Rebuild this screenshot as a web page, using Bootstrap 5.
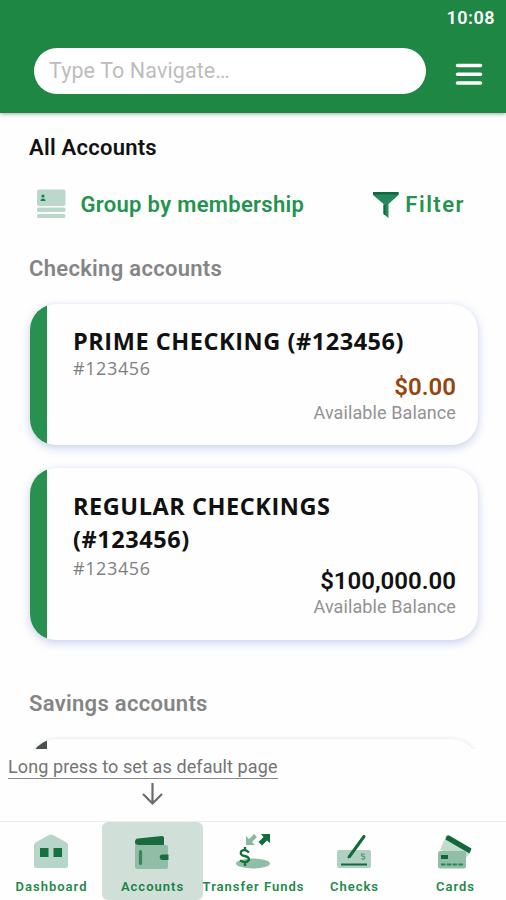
<!DOCTYPE html>
<html lang="en">
<head>
<meta charset="utf-8">
<meta name="viewport" content="width=device-width, initial-scale=1">
<title>All Accounts</title>
<link href="https://cdn.jsdelivr.net/npm/bootstrap@5.3.0/dist/css/bootstrap.min.css" rel="stylesheet">
<style>
body{font-family:Roboto,"Liberation Sans",sans-serif;background:#fefefe;color:#111;height:900px;overflow:hidden}
.app-header{height:113px;background:#1d8743;box-shadow:0 1px 4px rgba(0,0,0,.35);z-index:2;padding:6px 11px 0 34px}
.clock{font-size:18px;line-height:24px;font-weight:600;letter-spacing:.5px}
.search-row{margin-top:18px}
.search-box.form-control{width:392px;height:46px;border:0;border-radius:23px;padding:0 15px 2px;font-size:21.5px;letter-spacing:.1px;line-height:44px;color:#666}
.search-box::placeholder{color:#bdbdbd;opacity:1}
.menu-icon{display:block;margin-top:4px}
.accounts{height:636px;padding:21px 28px 0 29px}
.page-title{font-size:22px;line-height:28px;font-weight:600;letter-spacing:.25px}
.tools{height:40px;margin-top:22px;padding:0 13px 0 8px;font-size:22px;font-weight:600;color:#23934d}
.group-label{margin-left:14.5px;letter-spacing:.32px}
.filter-label{margin-left:6.5px;letter-spacing:1.5px}
.section-name{font-size:22px;line-height:28px;font-weight:600;letter-spacing:.3px;color:#858585}
.first-section{margin:31px 0 21px}
.second-section{margin:50px 0 21px}
.account{margin-left:1px;border-radius:26px;border:0;background:#fefefe;box-shadow:0 3px 10px rgba(105,130,205,.36),0 0 1px rgba(110,120,140,.2)}
.stripe{width:17px;background:#28914f}
.account-body{padding:21px 22px 0 26px}
.account-name{font-family:"Open Sans","Noto Sans",sans-serif;font-weight:700;font-size:23.5px;line-height:33px;letter-spacing:.55px;color:#111}
.account-no{font-family:"Open Sans","Noto Sans",sans-serif;font-size:18px;line-height:20px;color:#808080;letter-spacing:.6px}
.amount{font-size:24px;line-height:28px;font-weight:600}
.balance-label{font-size:18px;line-height:24px;color:#929292;letter-spacing:.1px}
.overdrawn{color:#95450f}
.prime{height:141px}
.prime .balance{margin-top:-5px}
.regular{height:172px;margin-top:23px}
.regular .account-body{padding-top:22px}
.regular .account-no{margin-top:2px}
.regular .balance{margin-top:-11px}
.savings{height:141px;box-shadow:0 1px 5px rgba(100,120,120,.3)}
.savings .stripe{background:#4b504e}
.hint{height:72px;padding:7px 8px 0;color:#747474;background:#fefefe;z-index:1}
.hint-text{font-size:18px;line-height:22px;border-bottom:1.5px solid #888;letter-spacing:.1px;width:270px;white-space:nowrap}
.hint-arrow{margin:4px 0 0 134px}
.tabs{height:79px;border-top:1px solid #ececec;background:#fefefe;z-index:1;padding-left:1px}
.tab{flex:1 1 0;min-width:0;padding-top:10px;color:#23894a;font-size:13px;font-weight:600;letter-spacing:1px;line-height:18px;white-space:nowrap;text-decoration:none}
.tab.active{background:#d0e0d8;border-radius:6px;color:#1c8143}
.tab svg{margin:0 1.5px 8px 0}
</style>
<script src="https://cdn.jsdelivr.net/npm/bootstrap@5.3.0/dist/js/bootstrap.bundle.min.js"></script>
</head>
<body class="d-flex flex-column">
<header class="app-header position-relative flex-shrink-0">
  <div class="clock text-white text-end">10:08</div>
  <div class="search-row d-flex align-items-center gap-4">
    <input class="form-control search-box" type="text" placeholder="Type To Navigate…" aria-label="Navigate">
    <button class="btn p-0 border-0 lh-1" aria-label="Menu">
      <svg class="menu-icon" width="38" height="34" viewBox="0 0 38 34" stroke="#fff" stroke-width="3.600" stroke-linecap="round"><path d="M7.500 9.500H30.500M7.500 18.300H30.500M7.500 27H30.500"/></svg>
    </button>
  </div>
</header>

<main class="accounts flex-shrink-0 overflow-hidden">
  <h1 class="page-title mb-0">All Accounts</h1>
  <div class="tools d-flex align-items-center justify-content-between">
    <div class="d-flex align-items-center">
      <svg width="29" height="30" viewBox="0 0 29 30"><g fill="#bcd8cc"><rect width="28.500" height="16.500" y=".5" rx="2"/><rect y="18.500" width="28.500" height="4.500" rx="1.500"/><rect y="25" width="28.500" height="4" rx="1.500"/></g><g fill="#17834a"><circle cx="6" cy="7" r="1.600"/><path d="M3.500 12q0-2.500 2.500-2.500T8.500 12z"/></g></svg>
      <span class="group-label">Group by membership</span>
    </div>
    <div class="d-flex align-items-center">
      <svg width="26" height="28" viewBox="0 0 26 28"><path fill="#26875c" d="M0 2h25.500v3L15.500 14v14L10.500 24V14L0 5z"/><path fill="#0e6a41" d="M0 2h25.500v2.500H0zM10.500 15h2v10.500l-2-1.500z"/></svg>
      <span class="filter-label">Filter</span>
    </div>
  </div>
  <h2 class="section-name first-section">Checking accounts</h2>
  <article class="card account flex-row overflow-hidden prime">
    <div class="stripe flex-shrink-0"></div>
    <div class="account-body flex-grow-1">
      <div class="account-name">PRIME CHECKING (#123456)</div>
      <div class="account-no">#123456</div>
      <div class="text-end balance">
        <div class="amount overdrawn">$0.00</div>
        <div class="balance-label">Available Balance</div>
      </div>
    </div>
  </article>
  <article class="card account flex-row overflow-hidden regular">
    <div class="stripe flex-shrink-0"></div>
    <div class="account-body flex-grow-1">
      <div class="account-name">REGULAR CHECKINGS<br>(#123456)</div>
      <div class="account-no">#123456</div>
      <div class="text-end balance">
        <div class="amount">$100,000.00</div>
        <div class="balance-label">Available Balance</div>
      </div>
    </div>
  </article>
  <h2 class="section-name second-section">Savings accounts</h2>
  <article class="card account flex-row overflow-hidden savings">
    <div class="stripe"></div>
  </article>
</main>

<div class="hint flex-shrink-0">
  <div class="hint-text">Long press to set as default page</div>
  <svg class="d-block hint-arrow" width="22" height="24" viewBox="0 0 22 24" fill="none" stroke="#6c6c6c" stroke-width="2.200"><path d="M10.500 0v20M1 11l9.500 9.500L20 11"/></svg>
</div>

<nav class="tabs d-flex flex-shrink-0">
  <a class="tab d-flex flex-column align-items-center" href="#">
    <svg width="38" height="38" viewBox="0 0 38 38"><path fill="#b7d5c8" d="M2 13Q2 11.500 3.500 10.500L17 3q2-1 4 0l13.500 7.500Q36 11.500 36 13v21q0 2-2 2H4q-2 0-2-2z"/><path fill="#15713e" d="M8 16h8.500v9H8zM21.500 16H30v9h-8.500z"/></svg>
    <span>Dashboard</span>
  </a>
  <a class="tab active d-flex flex-column align-items-center" href="#" aria-current="page">
    <svg width="38" height="38" viewBox="0 0 38 38"><path fill="#176b3d" d="M2 10q0-3 3-3.400L29 4q2 0 2 2v8H2z"/><path fill="#91bda7" d="M2 11q1 2 4 2h27q2 0 2 2v20q0 2-2 2H4q-2 0-2-2z"/><path d="M7.500 19.500v12" stroke="#39845a" stroke-width="3.200" stroke-linecap="round"/><path fill="#176b3d" d="M35.500 22.500h-6a2.700 2.700 0 0 0 0 5.500h6z"/></svg>
    <span>Accounts</span>
  </a>
  <a class="tab d-flex flex-column align-items-center" href="#">
    <svg width="38" height="38" viewBox="0 0 38 38"><ellipse cx="19" cy="31.500" rx="17" ry="5" fill="#91bda9"/><path fill="none" stroke="#13703c" stroke-width="2.300" d="M15 20.500Q10.500 16 7 19.500q-1 4 3.500 4.500 5 1 4.500 4-3 4-9 .500M11 15v4M11 29v5"/><path fill="#8bb69f" d="M12 13V4l3 3 5-5 3 3-5 5 3 3z"/><path fill="#126d3b" d="M36 2v9l-3-2.500-5 5-3.500-3.500 5-5L27 2z"/></svg>
    <span>Transfer Funds</span>
  </a>
  <a class="tab d-flex flex-column align-items-center" href="#">
    <svg width="38" height="38" viewBox="0 0 38 38"><rect x="2" y="18" width="34" height="18" rx="2" fill="#b0d0c1"/><path d="M6 32.500h26M13 26L29.500 3.500" stroke="#136b3b" fill="none" stroke-width="2"/><path d="M14.500 24.500L29 4.500" stroke="#136b3b" stroke-width="3" stroke-linecap="round"/><path d="M29.500 22.500q-3-1.500-3 .5 0 1 2 1.500t1 2-3 0" stroke="#59977a" fill="none" stroke-width="1.300"/></svg>
    <span>Checks</span>
  </a>
  <a class="tab d-flex flex-column align-items-center" href="#">
    <svg width="38" height="38" viewBox="0 0 38 38"><path fill="#c0dccd" d="M10 4q1-2 3-1l21 13q2 1 1 3l-5 7L4 18z"/><path fill="#12683a" d="M10.500 4.500q1-1.500 2.500-1l22.500 13-2 5L9.500 7.500z"/><rect x="2" y="19" width="28" height="17.500" rx="2" fill="#91bea7"/><path fill="#12683a" d="M5 23h7v4H5z"/><path d="M5 32.500h22" stroke="#337e54" stroke-width="2" stroke-dasharray="4.500 1.300"/></svg>
    <span>Cards</span>
  </a>
</nav>
</body>
</html>
